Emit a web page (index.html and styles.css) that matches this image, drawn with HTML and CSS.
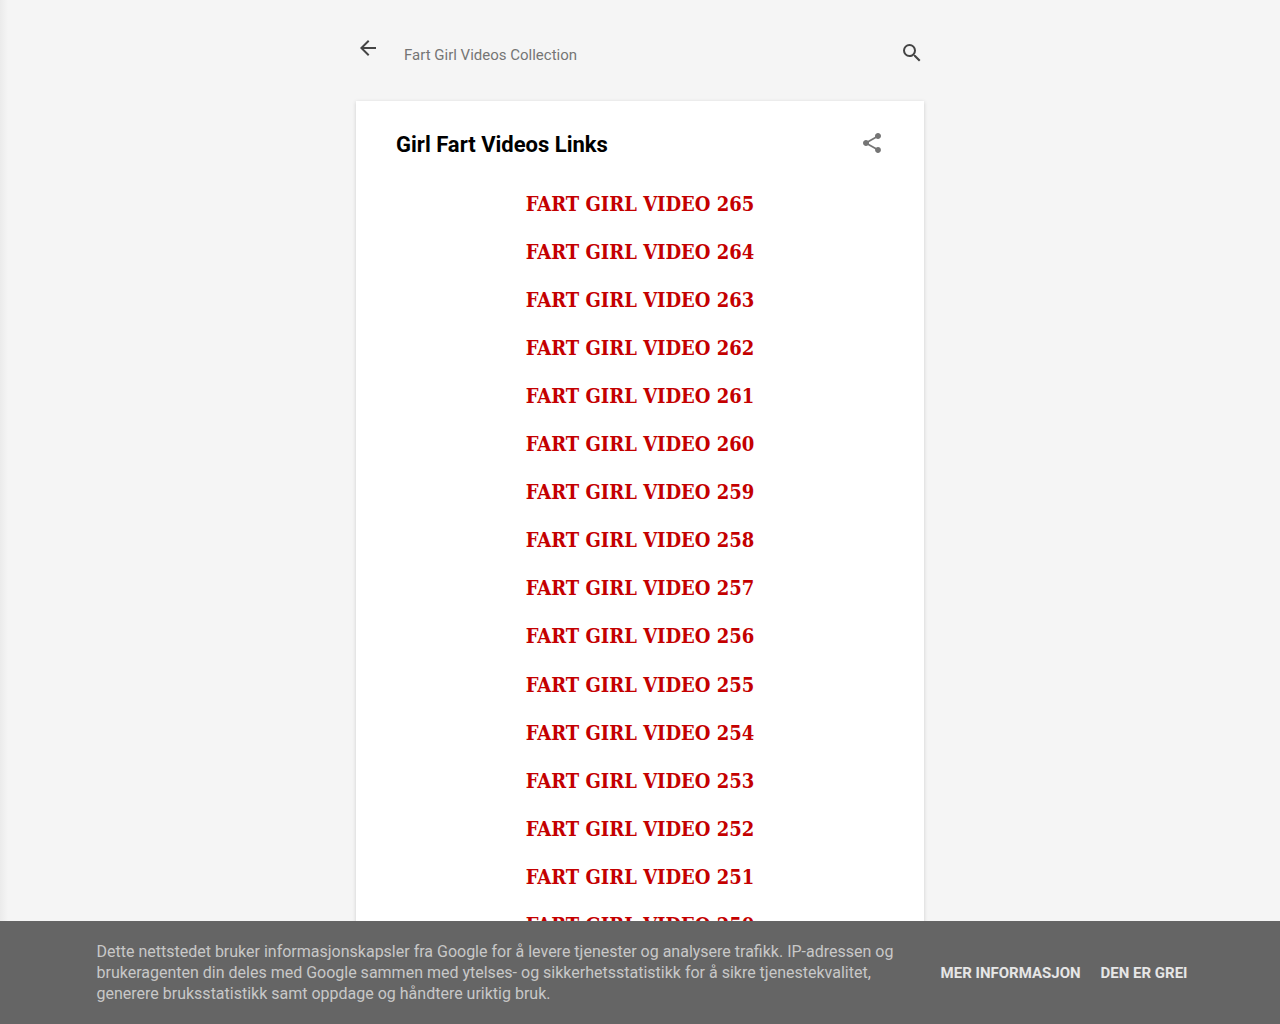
FILE: index.html
```html
<!DOCTYPE html>
<html lang="no">
<head>
<meta charset="utf-8">
<title>Girl Fart Videos Links</title>
<link rel="stylesheet" href="styles.css">
</head>
<body>
<div class="edge"></div>
<main class="column">
  <header class="topbar">
    <svg class="back" viewBox="0 0 24 24" width="24" height="24"><path d="M20 11H7.83l5.59-5.59L12 4l-8 8 8 8 1.41-1.41L7.83 13H20v-2z"/></svg>
    <span class="blogname">Fart Girl Videos Collection</span>
    <svg class="search" viewBox="0 0 24 24" width="24" height="24"><path d="M15.5 14h-.79l-.28-.27A6.471 6.471 0 0 0 16 9.5 6.5 6.5 0 1 0 9.5 16c1.61 0 3.09-.59 4.23-1.57l.27.28v.79l5 4.99L20.49 19l-4.99-5zm-6 0C7.01 14 5 11.99 5 9.5S7.01 5 9.5 5 14 7.01 14 9.5 11.99 14 9.5 14z"/></svg>
  </header>
  <article class="card">
    <div class="titlerow">
      <h1 class="title">Girl Fart Videos Links</h1>
      <svg class="share" viewBox="0 0 24 24" width="24" height="24"><path d="M18 16.08c-.76 0-1.44.3-1.96.77L8.91 12.7c.05-.23.09-.46.09-.7s-.04-.47-.09-.7l7.05-4.11c.54.5 1.25.81 2.04.81 1.66 0 3-1.34 3-3s-1.34-3-3-3-3 1.34-3 3c0 .24.04.47.09.7L8.04 9.81C7.5 9.31 6.79 9 6 9c-1.66 0-3 1.34-3 3s1.34 3 3 3c.79 0 1.5-.31 2.04-.81l7.12 4.16c-.05.21-.08.43-.08.65 0 1.61 1.31 2.92 2.92 2.92s2.92-1.31 2.92-2.92-1.31-2.92-2.92-2.92z"/></svg>
    </div>
    <ul class="links">
      <li><a href="#">FART GIRL VIDEO 265</a></li>
      <li><a href="#">FART GIRL VIDEO 264</a></li>
      <li><a href="#">FART GIRL VIDEO 263</a></li>
      <li><a href="#">FART GIRL VIDEO 262</a></li>
      <li><a href="#">FART GIRL VIDEO 261</a></li>
      <li><a href="#">FART GIRL VIDEO 260</a></li>
      <li><a href="#">FART GIRL VIDEO 259</a></li>
      <li><a href="#">FART GIRL VIDEO 258</a></li>
      <li><a href="#">FART GIRL VIDEO 257</a></li>
      <li><a href="#">FART GIRL VIDEO 256</a></li>
      <li><a href="#">FART GIRL VIDEO 255</a></li>
      <li><a href="#">FART GIRL VIDEO 254</a></li>
      <li><a href="#">FART GIRL VIDEO 253</a></li>
      <li><a href="#">FART GIRL VIDEO 252</a></li>
      <li><a href="#">FART GIRL VIDEO 251</a></li>
      <li><a href="#">FART GIRL VIDEO 250</a></li>
    </ul>
  </article>
</main>
<aside class="cookie">
  <p class="cookie-text">Dette nettstedet bruker informasjonskapsler fra Google for å levere tjenester og analysere trafikk. IP-adressen og brukeragenten din deles med Google sammen med ytelses- og sikkerhetsstatistikk for å sikre tjenestekvalitet, generere bruksstatistikk samt oppdage og håndtere uriktig bruk.</p>
  <div class="cookie-actions">
    <a href="#">MER INFORMASJON</a>
    <a href="#">DEN ER GREI</a>
  </div>
</aside>
</body>
</html>
```
FILE: styles.css
```css
html, body {
  margin: 0;
  height: 100%;
  overflow: hidden;
}
body {
  background: #f5f5f5;
  font-family: Roboto, sans-serif;
  position: relative;
}
.edge {
  position: absolute;
  left: 0;
  top: 0;
  bottom: 0;
  width: 8px;
  background: linear-gradient(to right, #ebebeb, #f5f5f5);
}
.column {
  position: relative;
  width: 568px;
  margin: 0 auto;
}
.topbar {
  height: 101px;
  display: flex;
  align-items: flex-start;
  box-sizing: border-box;
  padding: 36px 0 0;
}
.back { fill: #444; flex: none; }
.blogname {
  margin: 10px 0 0 24px;
  font-size: 15px;
  line-height: 18px;
  color: #757575;
  flex: 1;
}
.search { fill: #444; flex: none; margin: 5px 0 0 0; }
.card {
  background: #fff;
  box-shadow: 0 1px 4px rgba(0,0,0,.16);
  padding: 29px 40px 0;
  height: 900px;
}
.titlerow {
  display: flex;
  justify-content: space-between;
  align-items: flex-start;
  margin-bottom: 31.05px;
}
.title {
  margin: 0;
  font-size: 22px;
  font-weight: 700;
  line-height: 30px;
  color: #000;
}
.share { fill: #757575; margin: 1px 0 0 0; }
.links {
  list-style: none;
  margin: 0;
  padding: 0;
  text-align: center;
  font-family: "DejaVu Serif Condensed", "DejaVu Serif", serif;
  font-stretch: condensed;
  font-size: 20px;
  font-weight: 700;
  line-height: 27px;
}
.links li { margin-bottom: 21.05px; }
.links a { color: #c40000; text-decoration: none; }
.cookie {
  position: absolute;
  left: 0;
  right: 0;
  bottom: 0;
  height: 103px;
  background: #656565;
  display: flex;
  align-items: center;
  box-sizing: border-box;
  padding: 0 92.5px 0 96.5px;
  font-size: 16px;
  line-height: 21px;
  color: #c8c8c8;
}
.cookie-text {
  margin: 0;
  flex: 1;
  max-width: 810px;
}
.cookie-actions {
  display: flex;
  gap: 20px;
  margin-left: auto;
  padding-top: 1px;
}
.cookie-actions a {
  color: #e6e6e6;
  font-size: 15px;
  font-weight: 700;
  text-decoration: none;
  white-space: nowrap;
}
```
